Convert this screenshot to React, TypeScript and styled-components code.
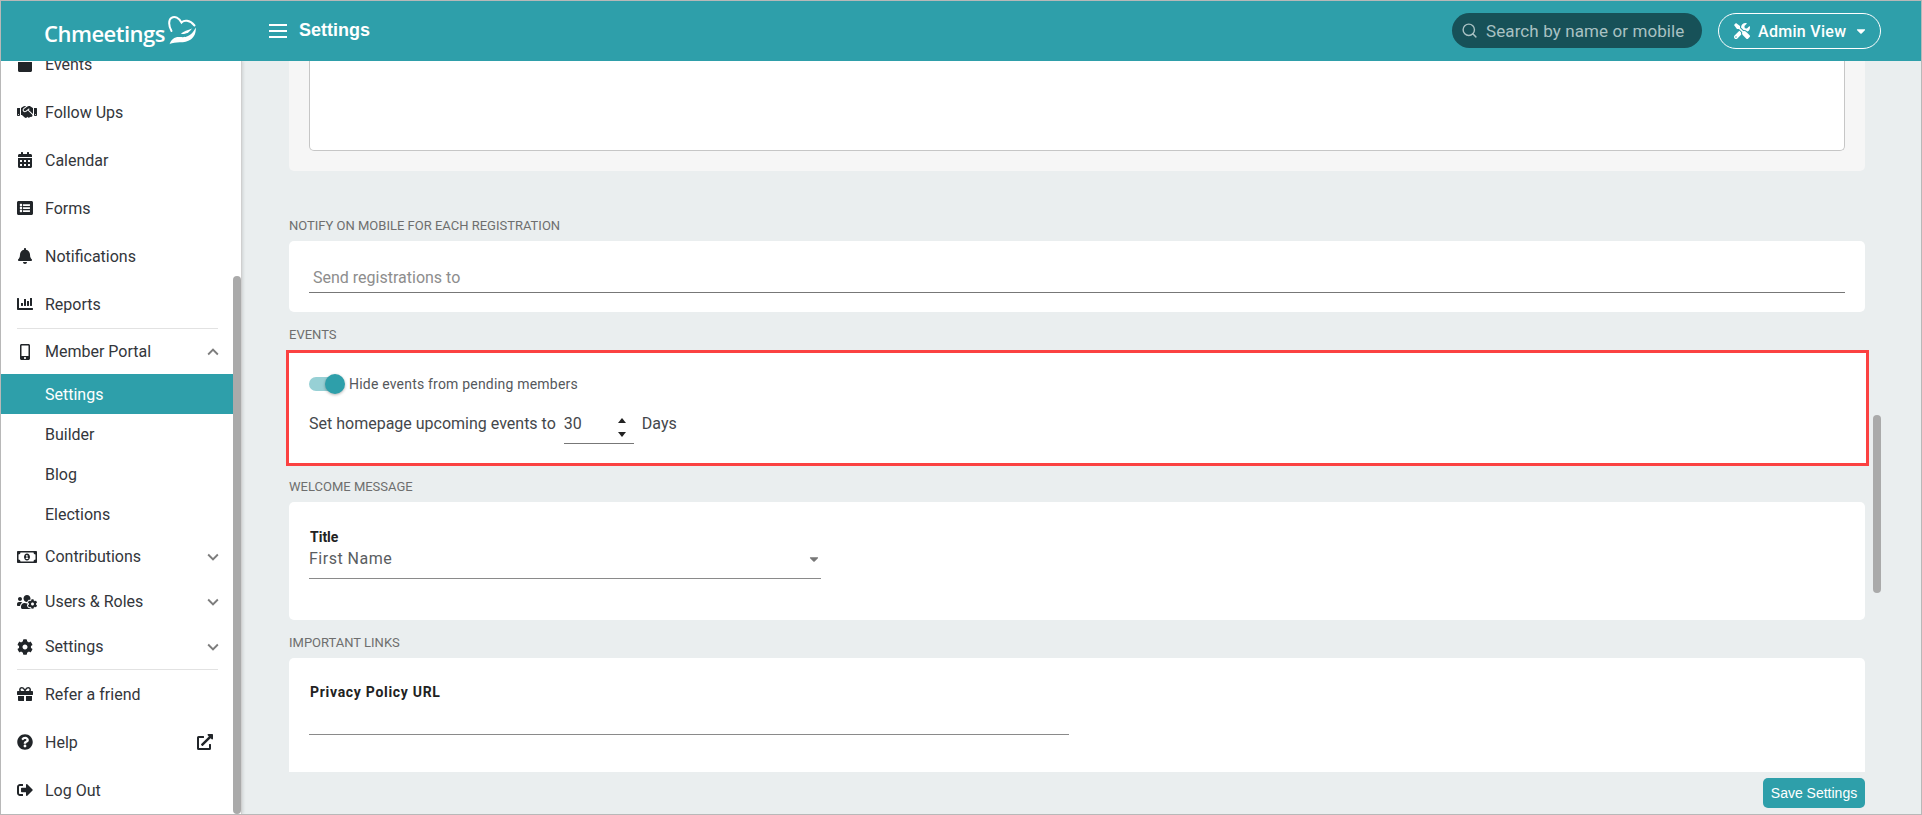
import React from "react";
import styled, { createGlobalStyle } from "styled-components";
import {
  FaBell,
  FaCalendar,
  FaCalendarAlt,
  FaCaretDown,
  FaChartBar,
  FaCog,
  FaExternalLinkAlt,
  FaGift,
  FaListAlt,
  FaMobileAlt,
  FaQuestionCircle,
  FaRegMoneyBillAlt,
  FaSignOutAlt,
  FaTools,
  FaUsersCog,
} from "react-icons/fa";
import { FaHandshake } from "react-icons/fa6";
import { MdExpandLess, MdExpandMore } from "react-icons/md";
import { FiSearch } from "react-icons/fi";

const GlobalStyle = createGlobalStyle`
  html, body {
    margin: 0;
    height: 100%;
    overflow: hidden;
    background: #eaeeef;
    font-family: Roboto, "Liberation Sans", sans-serif;
  }
  * { box-sizing: border-box; }
`;

const Frame = styled.div`
  position: relative;
  width: 1922px;
  height: 815px;
  border: 1px solid #b8b8b8;
  display: flex;
  flex-direction: column;
  overflow: hidden;
`;

const Header = styled.header`
  height: 60px;
  flex: none;
  background: #2e9faa;
  display: flex;
  align-items: center;
  color: #fff;
  z-index: 2;
`;

const Brand = styled.div`
  width: 268px;
  padding-left: 43px;
  display: flex;
  align-items: center;
  flex: none;
`;

const BrandName = styled.span`
  font-family: "Open Sans", sans-serif;
  font-size: 22px;
  font-weight: 600;
  letter-spacing: -0.5px;
  margin-top: 4px;
`;

const Burger = styled.div`
  width: 18px;
  height: 14px;
  border-top: 2px solid #fff;
  border-bottom: 2px solid #fff;
  display: flex;
  align-items: center;
  &::before {
    content: "";
    display: block;
    width: 100%;
    height: 2px;
    background: #fff;
  }
`;

const PageTitle = styled.div`
  margin-left: 12px;
  padding-bottom: 2px;
  font-family: "Liberation Sans", sans-serif;
  font-size: 18px;
  font-weight: 700;
  flex: 1;
`;

const SearchPill = styled.div`
  width: 250px;
  height: 35px;
  margin-top: -1px;
  border-radius: 18px;
  background: #175158;
  color: #a9c1c3;
  display: flex;
  align-items: center;
  gap: 8px;
  padding-left: 9px;
  font-size: 17px;
  letter-spacing: 0.1px;
  white-space: nowrap;
`;

const AdminButton = styled.div`
  width: 163px;
  height: 36px;
  margin: 0 40px 0 16px;
  border: 1px solid #fff;
  border-radius: 18px;
  display: flex;
  align-items: center;
  gap: 8px;
  padding-left: 15px;
  font-size: 16px;
  letter-spacing: 0.3px;
  font-weight: 500;
  white-space: nowrap;
`;

const Body = styled.div`
  flex: 1;
  display: flex;
  min-height: 0;
`;

const Sidebar = styled.nav`
  position: relative;
  width: 241px;
  flex: none;
  background: #fff;
  border-right: 1px solid #cfcfcf;
  box-shadow: 1px 0 3px rgba(0, 0, 0, 0.12);
  overflow: hidden;
`;

const NavList = styled.div`
  width: 232px;
  margin-top: -21px;
`;

const NavRow = styled.div<{ $height?: number }>`
  height: ${(p) => p.$height ?? 48}px;
  display: flex;
  align-items: center;
  padding-left: 16px;
  font-size: 16px;
  color: #33363b;
`;

const NavIcon = styled.span`
  width: 28px;
  flex: none;
  display: flex;
  align-items: center;
  color: #212529;
  font-size: 16px;
`;

const NavLink = styled(NavIcon)`
  width: 36px;
`;

const NavLabel = styled.span`
  flex: 1;
`;

const NavEnd = styled.span`
  width: 31px;
  flex: none;
  display: flex;
  align-items: center;
  color: #7d7d7d;
  font-size: 22px;
`;

const SubRow = styled.div<{ $active?: boolean }>`
  height: 40px;
  display: flex;
  align-items: center;
  padding-left: 44px;
  font-size: 16px;
  color: ${(p) => (p.$active ? "#fff" : "#33363b")};
  background: ${(p) => (p.$active ? "#2e9faa" : "transparent")};
`;

const Divider = styled.div`
  height: 1px;
  margin: 0 15px 0 16px;
  background: #e2e2e2;
`;

const Thumb = styled.div`
  position: absolute;
  width: 8px;
  border-radius: 4px;
  background: #aaa;
`;

const SideThumb = styled(Thumb)`
  right: 0;
  top: 215px;
  bottom: 0;
`;

const MainThumb = styled(Thumb)`
  left: 1872px;
  top: 414px;
  height: 178px;
`;

const Main = styled.main`
  flex: 1;
  display: flex;
  flex-direction: column;
  padding: 0 56px 0 47px;
  overflow: hidden;
`;

const MutedCard = styled.div`
  background: #f6f6f6;
  height: 110px;
  padding: 0 20px 20px;
  border-radius: 0 0 5px 5px;
  flex: none;
`;

const TextArea = styled.div`
  height: 90px;
  background: #fff;
  border: 1px solid #c6c6c6;
  border-top: none;
  border-radius: 0 0 5px 5px;
`;

const SectionLabel = styled.div<{ $top: number }>`
  margin-top: ${(p) => p.$top}px;
  margin-bottom: 8px;
  height: 14px;
  line-height: 14px;
  font-size: 13px;
  color: #6e6e6e;
  flex: none;
`;

const Card = styled.div<{ $height: number; $flat?: boolean }>`
  height: ${(p) => p.$height}px;
  background: #fff;
  border-radius: ${(p) => (p.$flat ? "5px 5px 0 0" : "5px")};
  padding: 0 20px;
  flex: none;
`;

const SendInput = styled.div`
  margin-top: 20px;
  height: 32px;
  border-bottom: 1px solid #777;
  padding: 0 4px;
  line-height: 33px;
  font-size: 16px;
  color: #8d8d8d;
`;

const HighlightBox = styled.div`
  height: 116px;
  margin: 0 -4px 0 -3px;
  background: #fff;
  border: 3px solid #fb4141;
  padding: 21px 20px 0;
  flex: none;
`;

const ToggleRow = styled.div`
  display: flex;
  align-items: center;
  height: 20px;
`;

const Toggle = styled.div`
  position: relative;
  width: 30px;
  height: 14px;
  border-radius: 7px;
  background: #97d0d5;
`;

const Knob = styled.div`
  position: absolute;
  right: -6px;
  top: -3px;
  width: 20px;
  height: 20px;
  border-radius: 50%;
  background: #2e9faa;
  box-shadow: 0 1px 3px rgba(0, 0, 0, 0.3);
`;

const ToggleLabel = styled.span`
  margin-left: 10px;
  font-size: 14px;
  letter-spacing: 0.2px;
  color: #55585c;
`;

const DaysRow = styled.div`
  display: flex;
  align-items: flex-start;
  margin-top: 18px;
  font-size: 16px;
  color: #44474b;
  line-height: 24px;
`;

const NumberBox = styled.div`
  width: 70px;
  height: 32px;
  margin: 0 8px;
  border-bottom: 1px solid #777;
  display: flex;
  justify-content: space-between;
`;

const Spinner = styled.div`
  width: 8px;
  margin: 6px 8px 0 0;
  display: flex;
  flex-direction: column;
  gap: 9px;
`;

const ArrowUp = styled.div`
  width: 0;
  height: 0;
  border-left: 4px solid transparent;
  border-right: 4px solid transparent;
  border-bottom: 5px solid #222;
`;

const ArrowDown = styled(ArrowUp)`
  border-bottom: none;
  border-top: 5px solid #222;
`;

const FieldLabel = styled.div<{ $spacing?: number }>`
  font-size: 14px;
  font-weight: 700;
  line-height: 16px;
  padding-left: 1px;
  letter-spacing: ${(p) => p.$spacing ?? 0}px;
  color: #222;
`;

const SelectBox = styled.div`
  width: 512px;
  height: 34px;
  border-bottom: 1px solid #8a8a8a;
  display: flex;
  align-items: center;
  justify-content: space-between;
  padding: 0 0 6px;
  font-size: 16px;
  letter-spacing: 0.5px;
  color: #5a5d61;
`;

const Caret = styled.span`
  display: flex;
  color: #777;
  font-size: 14px;
`;

const UrlInput = styled.div`
  width: 760px;
  height: 35px;
  border-bottom: 1px solid #8a8a8a;
`;

const CardBody = styled.div<{ $top: number }>`
  padding-top: ${(p) => p.$top}px;
`;

const Footer = styled.div`
  display: flex;
  justify-content: flex-end;
  margin-top: 6px;
`;

const SaveButton = styled.div`
  width: 102px;
  height: 30px;
  border-radius: 5px;
  background: #2e9faa;
  color: #fff;
  font-family: "Liberation Sans", sans-serif;
  font-size: 14px;
  display: flex;
  align-items: center;
  justify-content: center;
`;

const LogoMark = styled.svg`
  margin: -3px 0 0 3px;
  flex: none;
`;

// heart outline, leaf and the hand under it
const Logo = () => (
  <LogoMark width="30" height="30" viewBox="0 0 30 30" fill="none">
    <path
      d="M3.500 16C.5 11 .3 5 3.500 2.800c3.500-2.200 7.500.2 10 4.700C16 5 21.500 4.500 26.500 10.500"
      stroke="#fff"
      strokeWidth="2"
      strokeLinecap="round"
    />
    <path
      d="M1.500 29.500C3 24 7 21.500 12 22c3 .3 5.500.3 8-1 3-1.500 5.500-4 7.800-8.500.3 5.500-1.500 9.500-5 12-3 2.200-7 2.800-11 2.800-4 0-7 .7-10.300 1.700z"
      fill="#fff"
    />
    <path d="M13 18.500c3-2 6.500-3.500 11-5-2 3-4.500 5-8 5.500-1.500.2-2.200 0-3-.5z" fill="#fff" />
  </LogoMark>
);

const App = () => {
  return (
    <>
      <GlobalStyle />
      <Frame>
        <Header>
          <Brand>
            <BrandName>Chmeetings</BrandName>
            <Logo />
          </Brand>
          <Burger />
          <PageTitle>Settings</PageTitle>
          <SearchPill>
            <FiSearch size={17} />
            Search by name or mobile
          </SearchPill>
          <AdminButton>
            <FaTools size={16} />
            Admin View
            <FaCaretDown size={14} />
          </AdminButton>
        </Header>
        <Body>
          <Sidebar>
            <NavList>
              <NavRow>
                <NavIcon><FaCalendar /></NavIcon>
                <NavLabel>Events</NavLabel>
              </NavRow>
              <NavRow>
                <NavIcon><FaHandshake size={20} /></NavIcon>
                <NavLabel>Follow Ups</NavLabel>
              </NavRow>
              <NavRow>
                <NavIcon><FaCalendarAlt /></NavIcon>
                <NavLabel>Calendar</NavLabel>
              </NavRow>
              <NavRow>
                <NavIcon><FaListAlt /></NavIcon>
                <NavLabel>Forms</NavLabel>
              </NavRow>
              <NavRow>
                <NavIcon><FaBell /></NavIcon>
                <NavLabel>Notifications</NavLabel>
              </NavRow>
              <NavRow>
                <NavIcon><FaChartBar /></NavIcon>
                <NavLabel>Reports</NavLabel>
              </NavRow>
              <Divider />
              <NavRow $height={45}>
                <NavIcon><FaMobileAlt /></NavIcon>
                <NavLabel>Member Portal</NavLabel>
                <NavEnd><MdExpandLess /></NavEnd>
              </NavRow>
              <SubRow $active>Settings</SubRow>
              <SubRow>Builder</SubRow>
              <SubRow>Blog</SubRow>
              <SubRow>Elections</SubRow>
              <NavRow $height={45}>
                <NavIcon><FaRegMoneyBillAlt size={20} /></NavIcon>
                <NavLabel>Contributions</NavLabel>
                <NavEnd><MdExpandMore /></NavEnd>
              </NavRow>
              <NavRow $height={45}>
                <NavIcon><FaUsersCog size={20} /></NavIcon>
                <NavLabel>Users &amp; Roles</NavLabel>
                <NavEnd><MdExpandMore /></NavEnd>
              </NavRow>
              <NavRow $height={45}>
                <NavIcon><FaCog /></NavIcon>
                <NavLabel>Settings</NavLabel>
                <NavEnd><MdExpandMore /></NavEnd>
              </NavRow>
              <Divider />
              <NavRow>
                <NavIcon><FaGift /></NavIcon>
                <NavLabel>Refer a friend</NavLabel>
              </NavRow>
              <NavRow>
                <NavIcon><FaQuestionCircle /></NavIcon>
                <NavLabel>Help</NavLabel>
                <NavLink><FaExternalLinkAlt /></NavLink>
              </NavRow>
              <NavRow>
                <NavIcon><FaSignOutAlt /></NavIcon>
                <NavLabel>Log Out</NavLabel>
              </NavRow>
            </NavList>
            <SideThumb />
          </Sidebar>
          <Main>
            <MutedCard>
              <TextArea />
            </MutedCard>
            <SectionLabel $top={48}>NOTIFY ON MOBILE FOR EACH REGISTRATION</SectionLabel>
            <Card $height={71}>
              <SendInput>Send registrations to</SendInput>
            </Card>
            <SectionLabel $top={16}>EVENTS</SectionLabel>
            <HighlightBox>
              <ToggleRow>
                <Toggle><Knob /></Toggle>
                <ToggleLabel>Hide events from pending members</ToggleLabel>
              </ToggleRow>
              <DaysRow>
                Set homepage upcoming events to
                <NumberBox>
                  30
                  <Spinner>
                    <ArrowUp />
                    <ArrowDown />
                  </Spinner>
                </NumberBox>
                Days
              </DaysRow>
            </HighlightBox>
            <SectionLabel $top={14}>WELCOME MESSAGE</SectionLabel>
            <Card $height={118}>
              <CardBody $top={27}>
                <FieldLabel>Title</FieldLabel>
                <SelectBox>
                  First Name
                  <Caret><FaCaretDown /></Caret>
                </SelectBox>
              </CardBody>
            </Card>
            <SectionLabel $top={16}>IMPORTANT LINKS</SectionLabel>
            <Card $height={114} $flat>
              <CardBody $top={26}>
                <FieldLabel $spacing={0.7}>Privacy Policy URL</FieldLabel>
                <UrlInput />
              </CardBody>
            </Card>
            <Footer>
              <SaveButton>Save Settings</SaveButton>
            </Footer>
          </Main>
        </Body>
        <MainThumb />
      </Frame>
    </>
  );
};

export default App;
